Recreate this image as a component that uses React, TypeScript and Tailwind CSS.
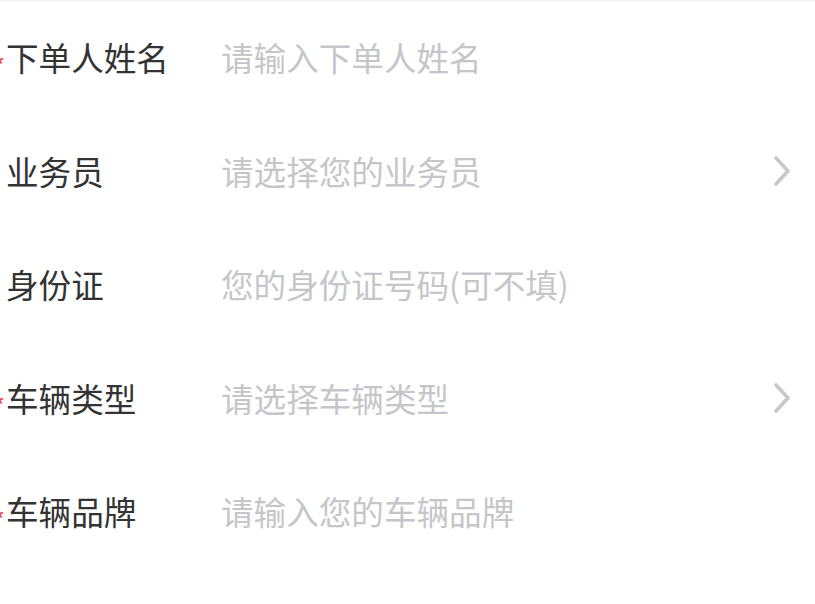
import React from "react";

const rows = [
  { label: "下单人姓名", placeholder: "请输入下单人姓名", required: true, arrow: false },
  { label: "业务员", placeholder: "请选择您的业务员", required: false, arrow: true },
  { label: "身份证", placeholder: "您的身份证号码(可不填)", required: false, arrow: false },
  { label: "车辆类型", placeholder: "请选择车辆类型", required: true, arrow: true },
  { label: "车辆品牌", placeholder: "请输入您的车辆品牌", required: true, arrow: false },
];

function Chevron() {
  return (
    <svg width="22" height="34" viewBox="0 0 22 34" fill="none">
      <path d="M4 4 L16 17 L4 30" stroke="#c8c8cc" strokeWidth="3.6" strokeLinecap="round" strokeLinejoin="round" />
    </svg>
  );
}

export default function App() {
  return (
    <div
      className="w-[815px] h-[604px] bg-white overflow-hidden relative"
      style={{ fontFamily: '"Noto Sans CJK SC", "Noto Sans", sans-serif' }}
    >
      <div className="absolute top-0 left-0 right-0 h-[2px] bg-gradient-to-b from-[#ececec] to-white" />
      <div className="pt-[1px]">
        {rows.map((r) => (
          <div key={r.label} className="h-[113.5px] flex items-center relative">
            {r.required && (
              <span className="absolute left-[-7px] top-1/2 -translate-y-[6px] text-[26px] leading-none text-[#ee3b3b]">*</span>
            )}
            <div className="w-[221px] pl-[6px] text-[32.6px] leading-none text-[#333333]">{r.label}</div>
            <div className="flex-1 text-[32.6px] leading-none text-[#c6c6ca]">{r.placeholder}</div>
            {r.arrow && (
              <div className="w-[43px] flex justify-start">
                <Chevron />
              </div>
            )}
          </div>
        ))}
      </div>
    </div>
  );
}
